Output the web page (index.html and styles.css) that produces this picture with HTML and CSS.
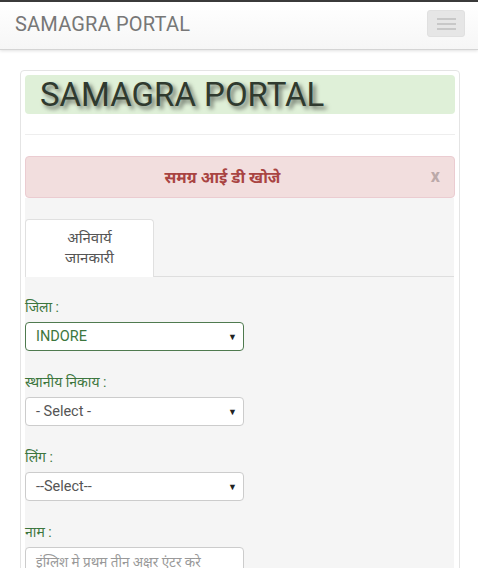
FILE: index.html
```html
<!DOCTYPE html>
<html lang="hi">
<head>
<meta charset="utf-8">
<title>SAMAGRA PORTAL</title>
<link rel="stylesheet" href="styles.css">
</head>
<body>
<nav class="navbar">
  <span class="brand">SAMAGRA PORTAL</span>
  <button class="toggle" aria-label="menu"><span class="bar"></span><span class="bar"></span><span class="bar"></span></button>
</nav>
<div class="panel">
  <div class="title">SAMAGRA PORTAL</div>
  <hr class="rule">
  <div class="alert"><span class="alert-text">समग्र आई डी खोजे</span><span class="close">x</span></div>
  <div class="well">
    <div class="tabs"><div class="tab">अनिवार्य<br>जानकारी</div></div>
    <div class="form">
      <div class="field">
        <div class="label">जिला :</div>
        <div class="select active"><span>INDORE</span><span class="arrow">▼</span></div>
      </div>
      <div class="field">
        <div class="label">स्थानीय निकाय :</div>
        <div class="select"><span>- Select -</span><span class="arrow">▼</span></div>
      </div>
      <div class="field">
        <div class="label">लिंग :</div>
        <div class="select"><span>--Select--</span><span class="arrow">▼</span></div>
      </div>
      <div class="field">
        <div class="label">नाम :</div>
        <div class="select input"><span class="ph">इंग्लिश मे प्रथम तीन अक्षर एंटर करे</span></div>
      </div>
    </div>
  </div>
</div>
</body>
</html>
```
FILE: styles.css
```css
html, body { margin: 0; padding: 0; background: #fff; }
body { font-family: Roboto, "Noto Sans", "Liberation Sans", sans-serif; color: #555; height: 568px; overflow: hidden; }

.navbar {
  height: 47px;
  border-top: 2px solid #3a3a3a;
  border-bottom: 1px solid #d4d4d4;
  background: linear-gradient(#ffffff, #f6f6f6);
  box-shadow: 0 1px 3px rgba(0,0,0,0.12);
  display: flex;
  align-items: center;
  justify-content: space-between;
  padding: 0 13px 0 15px;
}
.brand { font-size: 20px; color: #777; letter-spacing: 0.2px; margin-top: -3px; }
.toggle {
  width: 38px; height: 27px; margin-top: -4px;
  background: #e6e6e6; border: 1px solid #e0e0e0; border-radius: 3px;
  display: flex; flex-direction: column; align-items: center; justify-content: center; gap: 3px; padding: 0;
}
.bar { display: block; width: 19px; height: 2px; background: #c8c8c8; }

.panel {
  margin: 20px 18px 0 20px;
  border: 1px solid #e4e4e4;
  border-radius: 4px;
  padding: 4px 4px 0 4px;
  height: 600px;
}
.title {
  height: 39px;
  background: #dff0d8;
  border-radius: 4px;
  font-family: Roboto, "Liberation Sans", Arial, sans-serif;
  font-size: 33px;
  line-height: 40px;
  color: #2f3a2f;
  padding-left: 15px;
  text-shadow: 3px 3px 4px rgba(0,0,0,0.55);
}
.rule { border: 0; border-top: 1px solid #eee; margin: 20px 0 21px; }
.alert {
  height: 40px;
  background: #f2dede;
  border: 1px solid #ebccd1;
  border-radius: 4px;
  display: flex; align-items: center; justify-content: center;
  padding-right: 35px;
  position: relative;
}
.alert-text { font-weight: bold; font-size: 16px; color: #a94442; }
.close { position: absolute; right: 14px; top: 8px; font-size: 18px; font-weight: bold; color: #bba9a9; }

.well { background: #f5f5f5; padding-top: 21px; height: 400px; margin-right: 1px; }
.tabs { border-bottom: 1px solid #dedede; display: flex; }
.tab {
  width: 129px; margin-bottom: -1px;
  background: #fff; border: 1px solid #e0e0e0; border-bottom: 0;
  border-radius: 4px 4px 0 0;
  text-align: center; font-size: 15px; line-height: 20px; color: #555;
  padding-top: 8px; box-sizing: border-box; height: 58px;
}
.form { display: flex; flex-direction: column; gap: 23px; padding-top: 22px; }
.label { font-size: 14px; line-height: 17px; color: #3c763d; margin-bottom: 6px; }
.select {
  width: 219px; height: 29px; box-sizing: border-box;
  background: #fff; border: 1px solid #ccc; border-radius: 4px;
  display: flex; align-items: center; justify-content: space-between;
  padding: 0 6px 0 10px; font-size: 14.5px; color: #555;
}
.select.active { border-color: #4f7a4f; color: #3c763d; }
.arrow { font-size: 9px; color: #222; }
.ph { color: #999; font-size: 13.5px; }
```
